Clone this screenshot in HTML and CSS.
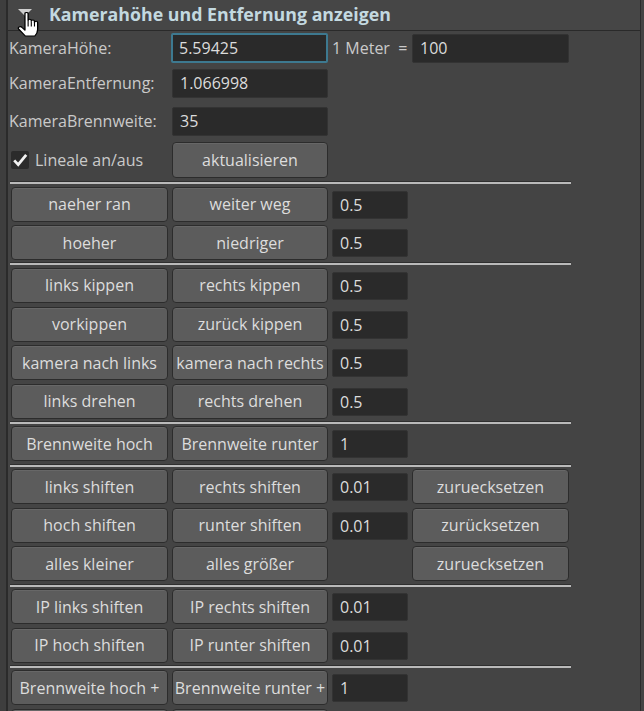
FILE: index.html
```html
<!DOCTYPE html>
<html lang="de">
<head>
    <meta charset="UTF-8">
    <title>Kamera Werkzeug</title>
    <link rel="stylesheet" href="styles.css">
</head>
<body>
    <div class="window">
        <div class="strip"></div>
        <div class="main">
            <div class="frame-head">
                <span class="arrow"></span>
                <span class="title">Kamerahöhe und Entfernung anzeigen</span>
                <!-- mouse pointer hovering the collapse arrow -->
                <svg class="pointer" width="22" height="25" viewBox="0 0 18 25" preserveAspectRatio="none">
                    <path d="M6.5 1.6 Q6.5 0.5 7.8 0.5 Q9.1 0.5 9.1 1.6 V8.5 Q9.1 7.3 10.4 7.3 Q11.7 7.3 11.7 8.5 V9.2 Q11.7 8 13 8 Q14.3 8 14.3 9.2 V10.4 Q14.3 9.2 15.6 9.2 Q16.9 9.2 16.9 10.4 V17.5 Q16.9 21 14.6 24 H6.8 L1.4 17.1 Q0.6 15.7 1.8 14.9 Q3.2 14.2 4.3 15.6 L6.5 18.1 Z"
                          fill="#fff" stroke="#000" stroke-width="1.1" stroke-linejoin="round"/>
                    <path d="M9.1 9 V14.5 M11.7 9.8 V14.5 M14.3 10.8 V14.5" stroke="#000" stroke-width="0.9"/>
                </svg>
            </div>

            <div class="frame-body">
                <div class="grid top">
                    <span class="label">KameraHöhe:</span>
                    <div class="field focus">5.59425</div>
                    <span class="label unit">1 Meter&nbsp; =</span>
                    <div class="field">100</div>

                    <span class="label">KameraEntfernung:</span>
                    <div class="field">1.066998</div>
                    <span></span><span></span>

                    <span class="label">KameraBrennweite:</span>
                    <div class="field">35</div>
                    <span></span><span></span>

                    <label class="check">
                        <span class="box">
                            <svg width="18" height="18" viewBox="0 0 18 18"><path d="M3.2 9.4 L7.2 13.6 L15.2 3.8" fill="none" stroke="#f2f2f2" stroke-width="2.8"/></svg>
                        </span>
                        Lineale an/aus
                    </label>
                    <button class="btn">aktualisieren</button>
                </div>

                <div class="sep"></div>
                <div class="grid">
                    <button class="btn">naeher ran</button>
                    <button class="btn">weiter weg</button>
                    <div class="field">0.5</div>
                    <span></span>
                    <button class="btn">hoeher</button>
                    <button class="btn">niedriger</button>
                    <div class="field">0.5</div>
                </div>

                <div class="sep"></div>
                <div class="grid">
                    <button class="btn">links kippen</button>
                    <button class="btn">rechts kippen</button>
                    <div class="field">0.5</div>
                    <span></span>
                    <button class="btn">vorkippen</button>
                    <button class="btn">zurück kippen</button>
                    <div class="field">0.5</div>
                    <span></span>
                    <button class="btn">kamera nach links</button>
                    <button class="btn">kamera nach rechts</button>
                    <div class="field">0.5</div>
                    <span></span>
                    <button class="btn">links drehen</button>
                    <button class="btn">rechts drehen</button>
                    <div class="field">0.5</div>
                </div>

                <div class="sep"></div>
                <div class="grid">
                    <button class="btn">Brennweite hoch</button>
                    <button class="btn">Brennweite runter</button>
                    <div class="field">1</div>
                </div>

                <div class="sep"></div>
                <div class="grid">
                    <button class="btn">links shiften</button>
                    <button class="btn">rechts shiften</button>
                    <div class="field">0.01</div>
                    <button class="btn">zuruecksetzen</button>
                    <button class="btn">hoch shiften</button>
                    <button class="btn">runter shiften</button>
                    <div class="field">0.01</div>
                    <button class="btn">zurücksetzen</button>
                    <button class="btn">alles kleiner</button>
                    <button class="btn">alles größer</button>
                    <span></span>
                    <button class="btn">zuruecksetzen</button>
                </div>

                <div class="sep"></div>
                <div class="grid">
                    <button class="btn">IP links shiften</button>
                    <button class="btn">IP rechts shiften</button>
                    <div class="field">0.01</div>
                    <span></span>
                    <button class="btn">IP hoch shiften</button>
                    <button class="btn">IP runter shiften</button>
                    <div class="field">0.01</div>
                </div>

                <div class="sep"></div>
                <div class="grid">
                    <button class="btn">Brennweite hoch +</button>
                    <button class="btn">Brennweite runter +</button>
                    <div class="field">1</div>
                    <span></span>
                    <button class="btn"></button>
                    <button class="btn"></button>
                    <div class="field"></div>
                </div>
            </div>
        </div>
    </div>
</body>
</html>
```

FILE: styles.css
```css
body {
    margin: 0;
    background: #444444;
    font-family: 'Open Sans', 'Liberation Sans', sans-serif;
    font-size: 16px;
    color: #cacaca;
    overflow: hidden;
}
.window {
    display: flex;
    height: 711px;
    overflow: hidden;
}
.strip {
    width: 6px;
    background: #3e3e3e;
    border-right: 2px solid #2b2b2b;
}
.main {
    width: 632px;
    border-right: 1px solid #2c2c2c;
}

/* collapsible frame header */
.frame-head {
    position: relative;
    height: 30px;
    background: #464646;
    border-bottom: 1px solid #2a2a2a;
    display: flex;
    align-items: center;
}
.arrow {
    width: 0;
    height: 0;
    margin: 0 17px 6px 10px;
    border-left: 7px solid transparent;
    border-right: 7px solid transparent;
    border-top: 7px solid #cfcfcf;
}
.title {
    font-weight: bold;
    font-size: 17.8px;
    color: #c3d9e0;
    margin-bottom: 3px;
}
.pointer {
    position: absolute;
    left: 9px;
    top: 12px;
}

/* frame body */
.frame-body {
    padding-left: 3px;
}
.grid {
    display: grid;
    grid-template-columns: 157px 156px 76px 157px;
    grid-auto-rows: 35px;
    column-gap: 4px;
    row-gap: 3.6px;
}
.grid.top {
    grid-template-rows: 34px 36px 40px 38px;
    row-gap: 0;
    align-items: center;
}
.sep {
    width: 561px;
    height: 3px;
    box-sizing: border-box;
    margin: 2.2px 0 2.5px -1px;
    background: #bababa;
    border-top: 1px solid #2f2f2f;
}
.label {
    margin-left: -2px;
    white-space: nowrap;
}
.label.unit {
    margin-left: 0;
}

.btn {
    display: flex;
    align-items: center;
    justify-content: center;
    height: 35px;
    padding: 0;
    background: #5c5c5c;
    border: 1px solid #2c2c2c;
    border-radius: 4px;
    box-shadow: inset 0 1px 0 rgba(255, 255, 255, 0.07);
    color: #dddddd;
    font-family: inherit;
    font-size: 16px;
    white-space: nowrap;
    overflow: hidden;
}
.grid.top .btn {
    height: 36px;
}

.field {
    align-self: center;
    height: 28px;
    box-sizing: border-box;
    padding: 0 7px;
    background: #2a2a2a;
    border: 1px solid #333333;
    border-radius: 2px;
    color: #dcdcdc;
    line-height: 26px;
    white-space: nowrap;
}
.grid .field {
    margin-top: 1px;
}
.grid.top .field {
    height: 29px;
    line-height: 27px;
    margin-top: 0;
}
.grid.top .field.focus {
    height: 30px;
    border: 2px solid #3d7990;
    padding-left: 6px;
    margin-left: -1px;
}

.check {
    display: flex;
    align-items: center;
    gap: 6px;
    white-space: nowrap;
}
.box {
    width: 18px;
    height: 18px;
    background: #2b2b2b;
    border-radius: 2px;
}
.box svg {
    display: block;
}
```
